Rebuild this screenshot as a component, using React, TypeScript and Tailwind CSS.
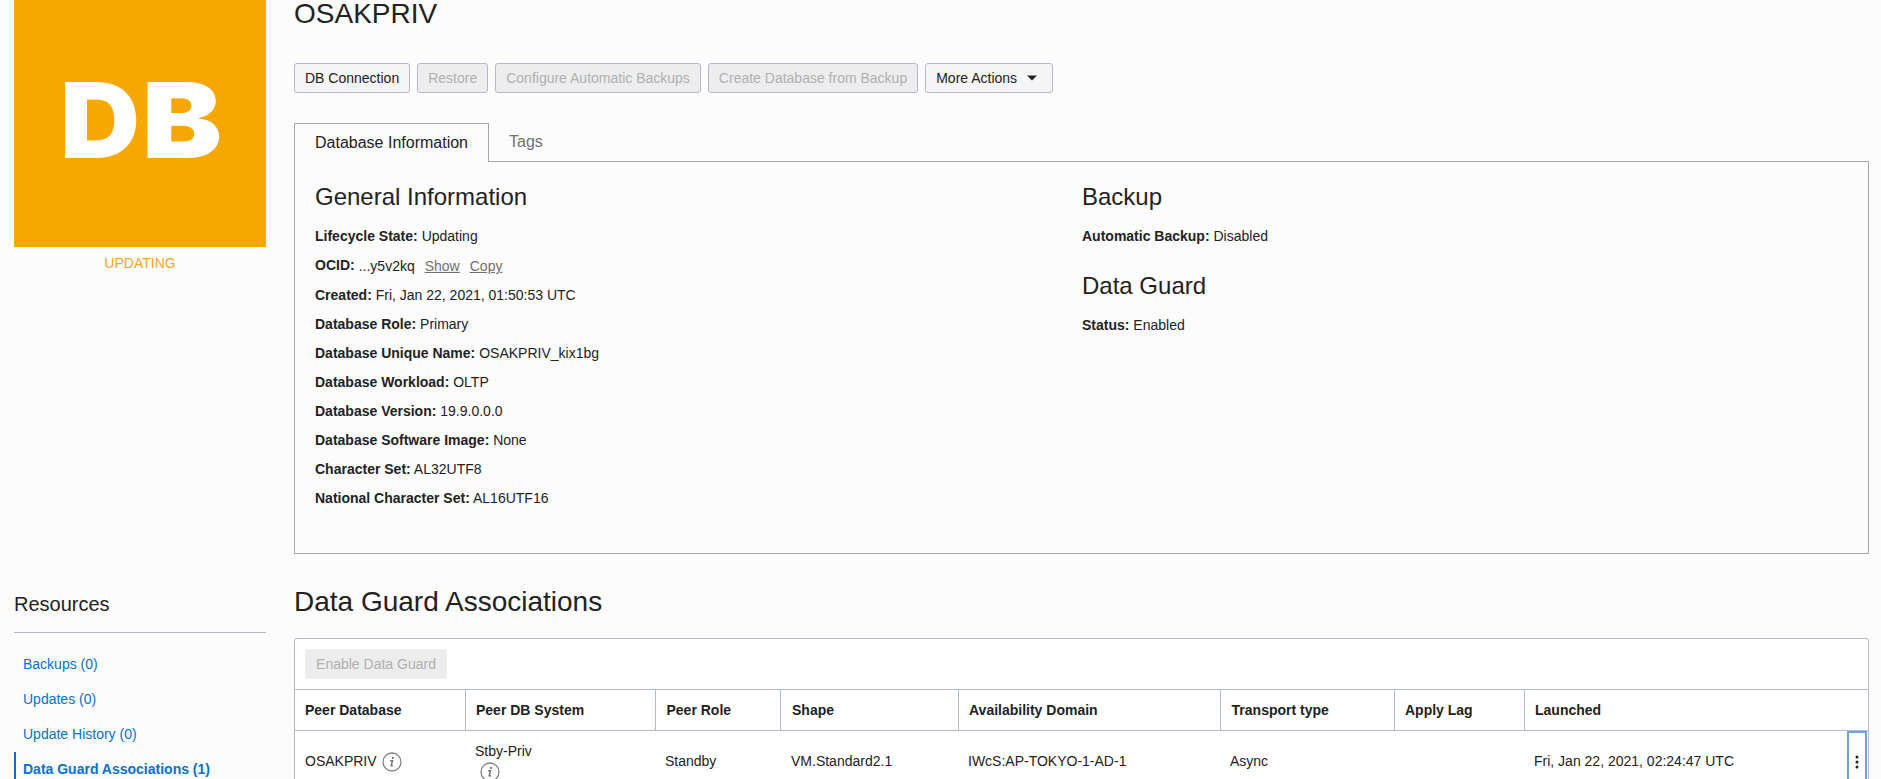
import React from "react";

const details: [string, string][] = [
  ["Created", "Fri, Jan 22, 2021, 01:50:53 UTC"],
  ["Database Role", "Primary"],
  ["Database Unique Name", "OSAKPRIV_kix1bg"],
  ["Database Workload", "OLTP"],
  ["Database Version", "19.9.0.0.0"],
  ["Database Software Image", "None"],
  ["Character Set", "AL32UTF8"],
  ["National Character Set", "AL16UTF16"],
];

const headers = [
  "Peer Database",
  "Peer DB System",
  "Peer Role",
  "Shape",
  "Availability Domain",
  "Transport type",
  "Apply Lag",
  "Launched",
];

const columns =
  "grid grid-cols-[171px_190px_125px_178px_262px_174px_130px_343px]";

function Field({ label, value }: { label: string; value: string }) {
  return (
    <p className="h-[29px] leading-[29px]">
      <b>{label}:</b> {value}
    </p>
  );
}

function Button({
  children,
  disabled = false,
}: {
  children: React.ReactNode;
  disabled?: boolean;
}) {
  return (
    <button
      className={
        "flex h-[30px] items-center rounded-[3px] border border-[#b3bac5] px-2.5 whitespace-nowrap " +
        (disabled ? "bg-[#ededed] text-[#b0b0b0]" : "bg-[#f5f5f5] text-[#222]")
      }
    >
      {children}
    </button>
  );
}

function InfoIcon() {
  return (
    <svg width="20" height="20" viewBox="0 0 20 20" fill="none" className="shrink-0">
      <circle cx="10" cy="10" r="9" stroke="#808080" strokeWidth="1.3" />
      <circle cx="10.9" cy="5.9" r="1.1" fill="#707070" />
      <path d="M8.2 8.7h2.3l-1.3 5.2h1.9" stroke="#707070" strokeWidth="1.4" />
    </svg>
  );
}

export default function App() {
  return (
    <div className="flex h-[779px] w-[1881px] overflow-hidden bg-[#fcfcfc] font-['Liberation_Sans',Arial,sans-serif] text-[14px] text-[#222]">
      <aside className="ml-3.5 w-[252px] shrink-0">
        <div className="h-[247px] bg-[#f7a800]">
          <svg
            width="252"
            height="247"
            viewBox="0 0 252 247"
            fill="#fff"
            aria-label="DB"
            className="font-['Inter',sans-serif] text-[104.5px] font-black"
          >
            <text x="46" y="158" textLength="80" lengthAdjust="spacingAndGlyphs">
              D
            </text>
            <text x="128" y="158" textLength="80" lengthAdjust="spacingAndGlyphs">
              B
            </text>
          </svg>
        </div>
        <p className="mt-[7px] text-center leading-[18px] text-[#f5a623]">UPDATING</p>
        <h2 className="mt-[317px] h-[44px] border-b border-[#b3bac5] text-[20px] leading-[30px]">
          Resources
        </h2>
        <nav className="mt-[14px] leading-[35px] text-[#0572ce]">
          <a className="block h-[35px] pl-[9px]">Backups (0)</a>
          <a className="block h-[35px] pl-[9px]">Updates (0)</a>
          <a className="block h-[35px] pl-[9px]">Update History (0)</a>
          <a className="block h-[35px] border-l-2 border-[#0572ce] pl-[7px] font-bold">
            Data Guard Associations (1)
          </a>
        </nav>
      </aside>

      <main className="ml-7 w-[1575px] shrink-0">
        <h1 className="h-[63px] text-[28px] leading-[28px]">OSAKPRIV</h1>
        <div className="flex gap-[7px]">
          <Button>DB Connection</Button>
          <Button disabled>Restore</Button>
          <Button disabled>Configure Automatic Backups</Button>
          <Button disabled>Create Database from Backup</Button>
          <Button>
            More Actions
            <svg width="10" height="6" viewBox="0 0 10 6" className="mr-[5px] ml-2.5">
              <path d="M0 .5h10L5 5.5z" fill="#222" />
            </svg>
          </Button>
        </div>

        <div className="mt-[30px] flex h-[39px] text-[16px]">
          <div className="w-[195px] border border-b-0 border-[#a8a8a8] pl-5 leading-[38px]">
            Database Information
          </div>
          <div className="flex-1 border-b border-[#a8a8a8] pl-5 leading-[38px] text-[#707070]">
            Tags
          </div>
        </div>
        <section className="flex h-[392px] border border-t-0 border-[#a8a8a8] pt-[17px] pl-5">
          <div className="w-[767px]">
            <h2 className="mb-2 h-[35px] text-[24px] leading-[35px]">General Information</h2>
            <Field label="Lifecycle State" value="Updating" />
            <div className="flex h-[30px] leading-[29px]">
              <b>OCID:</b>
              <span className="pt-px pl-1">...y5v2kq</span>
              <a className="pt-px pl-2.5 text-[#707070] underline">Show</a>
              <a className="pt-px pl-2.5 text-[#707070] underline">Copy</a>
            </div>
            {details.map(([label, value]) => (
              <Field key={label} label={label} value={value} />
            ))}
          </div>
          <div>
            <h2 className="mb-2 h-[35px] text-[24px] leading-[35px]">Backup</h2>
            <Field label="Automatic Backup" value="Disabled" />
            <h2 className="mt-[17px] mb-2 h-[35px] text-[24px] leading-[35px]">Data Guard</h2>
            <Field label="Status" value="Enabled" />
          </div>
        </section>

        <h2 className="mt-[30px] text-[28px] leading-[36px]">Data Guard Associations</h2>
        <section className="mt-[18px] h-[180px] rounded-t-[3px] border border-[#b3bac5] bg-white">
          <div className="flex h-[51px] items-center border-b border-[#b3bac5] pl-2.5">
            <button className="h-[30px] w-[142px] rounded-[3px] bg-[#ededed] text-[#b0b0b0]">
              Enable Data Guard
            </button>
          </div>
          <div className={columns + " h-[41px] border-b border-[#b3bac5] font-bold leading-[40px]"}>
            {headers.map((h) => (
              <div
                key={h}
                className="border-r border-[#b3bac5] pl-2.5 last:border-r-0 nth-[3]:pl-[10.5px] nth-[4]:pl-[11px] nth-[6]:pl-[10.6px]"
              >
                {h}
              </div>
            ))}
          </div>
          <div className={columns + " h-[61px] items-center"}>
            <div className="flex items-center gap-[5px] pl-2.5">
              OSAKPRIV <InfoIcon />
            </div>
            <div className="pl-[9px]">
              <p className="pb-px leading-[19px]">Stby-Priv</p>
              <div className="pl-[5px]">
                <InfoIcon />
              </div>
            </div>
            <div className="pl-[9px]">Standby</div>
            <div className="pl-2.5">VM.Standard2.1</div>
            <div className="pl-[9px]">IWcS:AP-TOKYO-1-AD-1</div>
            <div className="pl-[9px]">Async</div>
            <div />
            <div className="flex h-full items-center justify-between pr-px pl-[9px]">
              Fri, Jan 22, 2021, 02:24:47 UTC
              <button className="flex h-full w-5 items-center justify-center border-2 border-[#6fa3e0]">
                <svg width="4" height="16" viewBox="0 0 4 16" fill="#222">
                  <circle cx="2" cy="3" r="1.5" />
                  <circle cx="2" cy="8" r="1.5" />
                  <circle cx="2" cy="13" r="1.5" />
                </svg>
              </button>
            </div>
          </div>
        </section>
      </main>
    </div>
  );
}
